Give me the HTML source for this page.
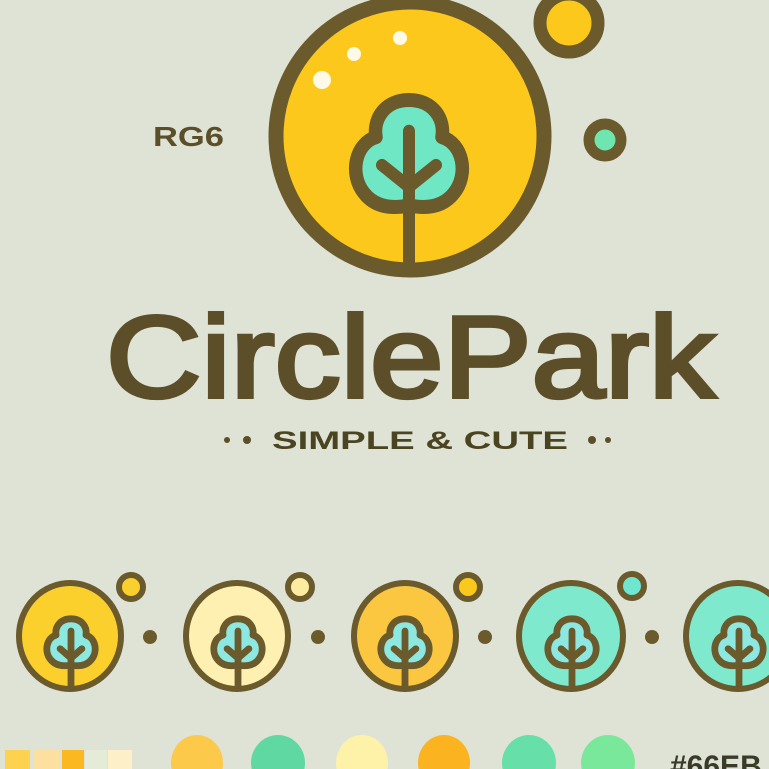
<!DOCTYPE html>
<html><head><style>
html,body{margin:0;padding:0;background:#dfe3d6;}
svg{display:block}
</style></head><body>
<svg width="769" height="769" viewBox="0 0 769 769" xmlns="http://www.w3.org/2000/svg">
<rect width="769" height="769" fill="#dfe3d6"/>
<!-- main logo -->
<circle cx="410" cy="136" r="134" fill="#fcc81c" stroke="#6a5a2c" stroke-width="15"/>
<ellipse cx="322" cy="80" rx="9" ry="9" fill="#fff" opacity="0.9"/>
<ellipse cx="354" cy="54" rx="7" ry="7" fill="#fff" opacity="0.9"/>
<ellipse cx="400" cy="38" rx="7" ry="7" fill="#fff" opacity="0.9"/>
<g transform="translate(409,162) scale(1.5,1.55)">
<path d="M0,-40 C-16,-40 -24,-28 -22,-16 C-36,-12 -40,8 -30,20 C-22,30 -10,30 0,28 C10,30 22,30 30,20 C40,8 36,-12 22,-16 C24,-28 16,-40 0,-40 Z" fill="#6fe6c4" stroke="#6a5a2c" stroke-width="9" stroke-linejoin="round"/>
<path d="M0,-20 L0,66 M-18,2 L0,16 L18,2" fill="none" stroke="#6a5a2c" stroke-width="8" stroke-linecap="round" stroke-linejoin="round"/>
</g>
<circle cx="569" cy="23" r="29" fill="#fcc81c" stroke="#6a5a2c" stroke-width="13"/>
<circle cx="605" cy="140" r="16" fill="#6fe6b0" stroke="#6a5a2c" stroke-width="11"/>
<text x="153" y="146" font-family="Liberation Sans, sans-serif" font-size="28" font-weight="bold" fill="#5c4e28" textLength="71" lengthAdjust="spacingAndGlyphs">RG6</text>
<text x="106" y="397" font-family="Liberation Sans, sans-serif" font-size="116" font-weight="normal" fill="#5c4e28" stroke="#5c4e28" stroke-width="4" textLength="609" lengthAdjust="spacingAndGlyphs">CirclePark</text>
<text x="272" y="449" font-family="Liberation Sans, sans-serif" font-size="25" font-weight="bold" fill="#4a4420" textLength="296" lengthAdjust="spacingAndGlyphs">SIMPLE &amp; CUTE</text>
<circle cx="227" cy="440" r="3" fill="#5c4e28"/><circle cx="247" cy="440" r="4" fill="#5c4e28"/>
<circle cx="592" cy="440" r="4" fill="#5c4e28"/><circle cx="608" cy="440" r="3" fill="#5c4e28"/>
<!-- bottom row -->
<g stroke="#6a5a2c">
<ellipse cx="70" cy="636" rx="51" ry="53" fill="#fcd02c" stroke-width="6"/>
<ellipse cx="237" cy="636" rx="51" ry="53" fill="#fdf0b0" stroke-width="6"/>
<ellipse cx="405" cy="636" rx="51" ry="53" fill="#fbc640" stroke-width="6"/>
<ellipse cx="571" cy="636" rx="52" ry="53" fill="#7ee9cc" stroke-width="6"/>
<ellipse cx="738" cy="636" rx="52" ry="53" fill="#7ee9cc" stroke-width="6"/>
<circle cx="131" cy="587" r="12" fill="#fcd02c" stroke-width="6"/>
<circle cx="300" cy="587" r="12" fill="#fdeba0" stroke-width="6"/>
<circle cx="468" cy="587" r="12" fill="#fcc81c" stroke-width="6"/>
<circle cx="632" cy="586" r="12" fill="#6fe6d0" stroke-width="6"/>
</g>
<g fill="#6a5a2c"><circle cx="150" cy="637" r="7"/><circle cx="318" cy="637" r="7"/><circle cx="485" cy="637" r="7"/><circle cx="652" cy="637" r="7"/></g>
<g id="t1" transform="translate(71,646) scale(0.68)">
<path d="M0,-40 C-16,-40 -24,-28 -22,-16 C-36,-12 -40,8 -30,20 C-22,30 -10,30 0,28 C10,30 22,30 30,20 C40,8 36,-12 22,-16 C24,-28 16,-40 0,-40 Z" fill="#8ce8e0" stroke="#6a5a2c" stroke-width="10" stroke-linejoin="round"/>
<path d="M0,-22 L0,62 M-16,4 L0,18 L16,4" fill="none" stroke="#6a5a2c" stroke-width="10" stroke-linecap="round" stroke-linejoin="round"/>
</g>
<use href="#t1" x="167"/><use href="#t1" x="334"/><use href="#t1" x="501"/><use href="#t1" x="668"/>
<!-- swatches -->
<g>
<rect x="5" y="750" width="25" height="19" fill="#fcd24e"/>
<rect x="33" y="750" width="27" height="19" fill="#fde0a0"/>
<rect x="62" y="750" width="22" height="19" fill="#fbb820"/>
<rect x="85" y="750" width="22" height="19" fill="#e4ecd8"/>
<rect x="108" y="750" width="24" height="19" fill="#fdf0c8"/>
<ellipse cx="197" cy="763" rx="26" ry="28" fill="#fcc94a"/>
<ellipse cx="278" cy="763" rx="27" ry="28" fill="#60d8a2"/>
<ellipse cx="362" cy="763" rx="26" ry="28" fill="#fdf2a8"/>
<ellipse cx="444" cy="763" rx="26" ry="28" fill="#fbb320"/>
<ellipse cx="529" cy="763" rx="27" ry="28" fill="#66e0a8"/>
<ellipse cx="608" cy="763" rx="27" ry="28" fill="#7ae89a"/>
</g>
<text x="670" y="776" font-family="Liberation Sans, sans-serif" font-size="30" font-weight="bold" fill="#3a3a28">#66EB</text>
</svg>
</body></html>
